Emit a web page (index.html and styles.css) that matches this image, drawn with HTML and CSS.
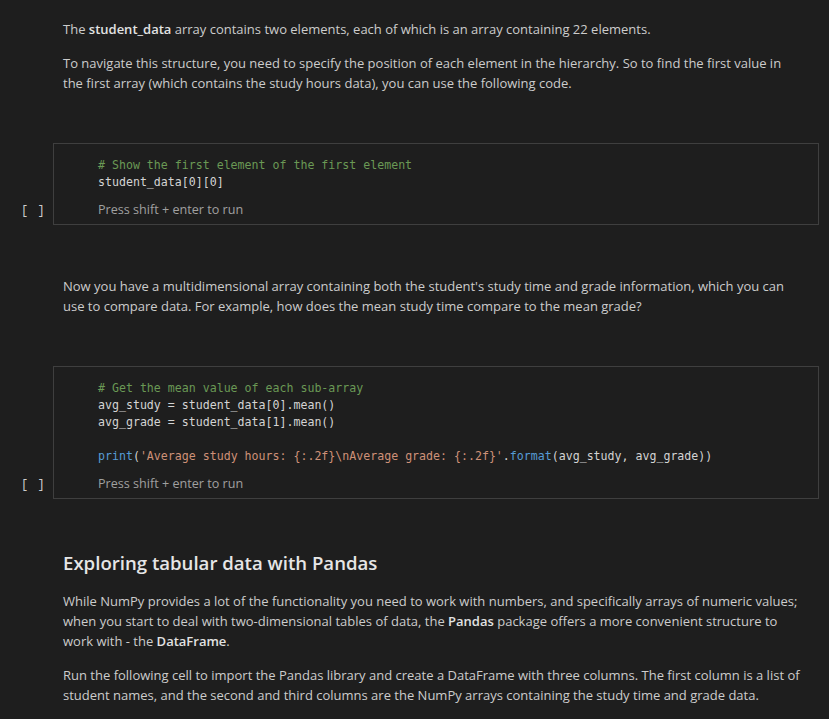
FILE: index.html
```html
<!DOCTYPE html>
<html>
<head>
<meta charset="utf-8">
<link rel="stylesheet" href="styles.css">
</head>
<body>
<div class="notebook">
  <div class="md">
    <p>The <strong>student_data</strong> array contains two elements, each of which is an array containing 22 elements.</p>
    <p>To navigate this structure, you need to specify the position of each element in the hierarchy. So to find the first value in the first array (which contains the study hours data), you can use the following code.</p>
  </div>

  <div class="cell">
    <div class="gutter"><span class="exec">[ ]</span></div>
    <div class="cell-box">
      <pre class="code"><span class="c"># Show the first element of the first element</span>
student_data[0][0]</pre>
      <div class="hint">Press shift + enter to run</div>
    </div>
  </div>

  <div class="md md-2">
    <p>Now you have a multidimensional array containing both the student's study time and grade information, which you can use to compare data. For example, how does the mean study time compare to the mean grade?</p>
  </div>

  <div class="cell">
    <div class="gutter"><span class="exec">[ ]</span></div>
    <div class="cell-box">
      <pre class="code"><span class="c"># Get the mean value of each sub-array</span>
avg_study = student_data[0].mean()
avg_grade = student_data[1].mean()

<span class="f">print</span>(<span class="s">'Average study hours: {:.2f}\nAverage grade: {:.2f}'</span>.<span class="f">format</span>(avg_study, avg_grade))</pre>
      <div class="hint">Press shift + enter to run</div>
    </div>
  </div>

  <div class="md md-3">
    <h2>Exploring tabular data with Pandas</h2>
    <p>While NumPy provides a lot of the functionality you need to work with numbers, and specifically arrays of numeric values; when you start to deal with two-dimensional tables of data, the <strong>Pandas</strong> package offers a more convenient structure to work with - the <strong>DataFrame</strong>.</p>
    <p>Run the following cell to import the Pandas library and create a DataFrame with three columns. The first column is a list of student names, and the second and third columns are the NumPy arrays containing the study time and grade data.</p>
  </div>
</div>
</body>
</html>
```

FILE: styles.css
```css
html, body {
  margin: 0;
  padding: 0;
  background: #1e1e1e;
}

body {
  font-family: "Open Sans", "Noto Sans", sans-serif;
  font-size: 13px;
  color: #cccccc;
  overflow: hidden;
}

.notebook {
  padding-top: 19px;
}

.md {
  padding: 0 26px 0 63px;
}

.md p {
  margin: 0 0 14px;
  line-height: 20px;
}

.md strong {
  font-weight: 600;
  color: #e2e2e2;
}

.md-2 {
  margin-top: 51px;
}

.md-3 {
  margin-top: 50px;
}

.md h2 {
  margin: 0 0 14px;
  font-size: 18.6px;
  line-height: 28px;
  font-weight: 600;
  color: #e6e6e6;
}

.cell {
  display: flex;
  margin-top: 50px;
}

.gutter {
  width: 53px;
  display: flex;
  align-items: flex-end;
  justify-content: flex-start;
  padding-bottom: 5px;
  box-sizing: border-box;
}

.exec {
  margin-left: 21px;
  font-family: "Liberation Mono", monospace;
  font-size: 12px;
  line-height: 18px;
  color: #cccccc;
  letter-spacing: 1px;
}

.cell-box {
  flex: 1;
  margin-right: 10px;
  border: 1px solid #3f3f3f;
  padding: 13px 0 5px 44px;
}

.code {
  margin: 0;
  font-family: "DejaVu Sans Mono", "Liberation Mono", monospace;
  font-size: 11.6px;
  line-height: 17px;
  color: #d4d4d4;
}

.code .c { color: #6a9955; }
.code .s { color: #ce9178; }
.code .f { color: #569cd6; }

.hint {
  margin-top: 10px;
  font-size: 12.6px;
  line-height: 18px;
  color: #a0a0a0;
}
```
